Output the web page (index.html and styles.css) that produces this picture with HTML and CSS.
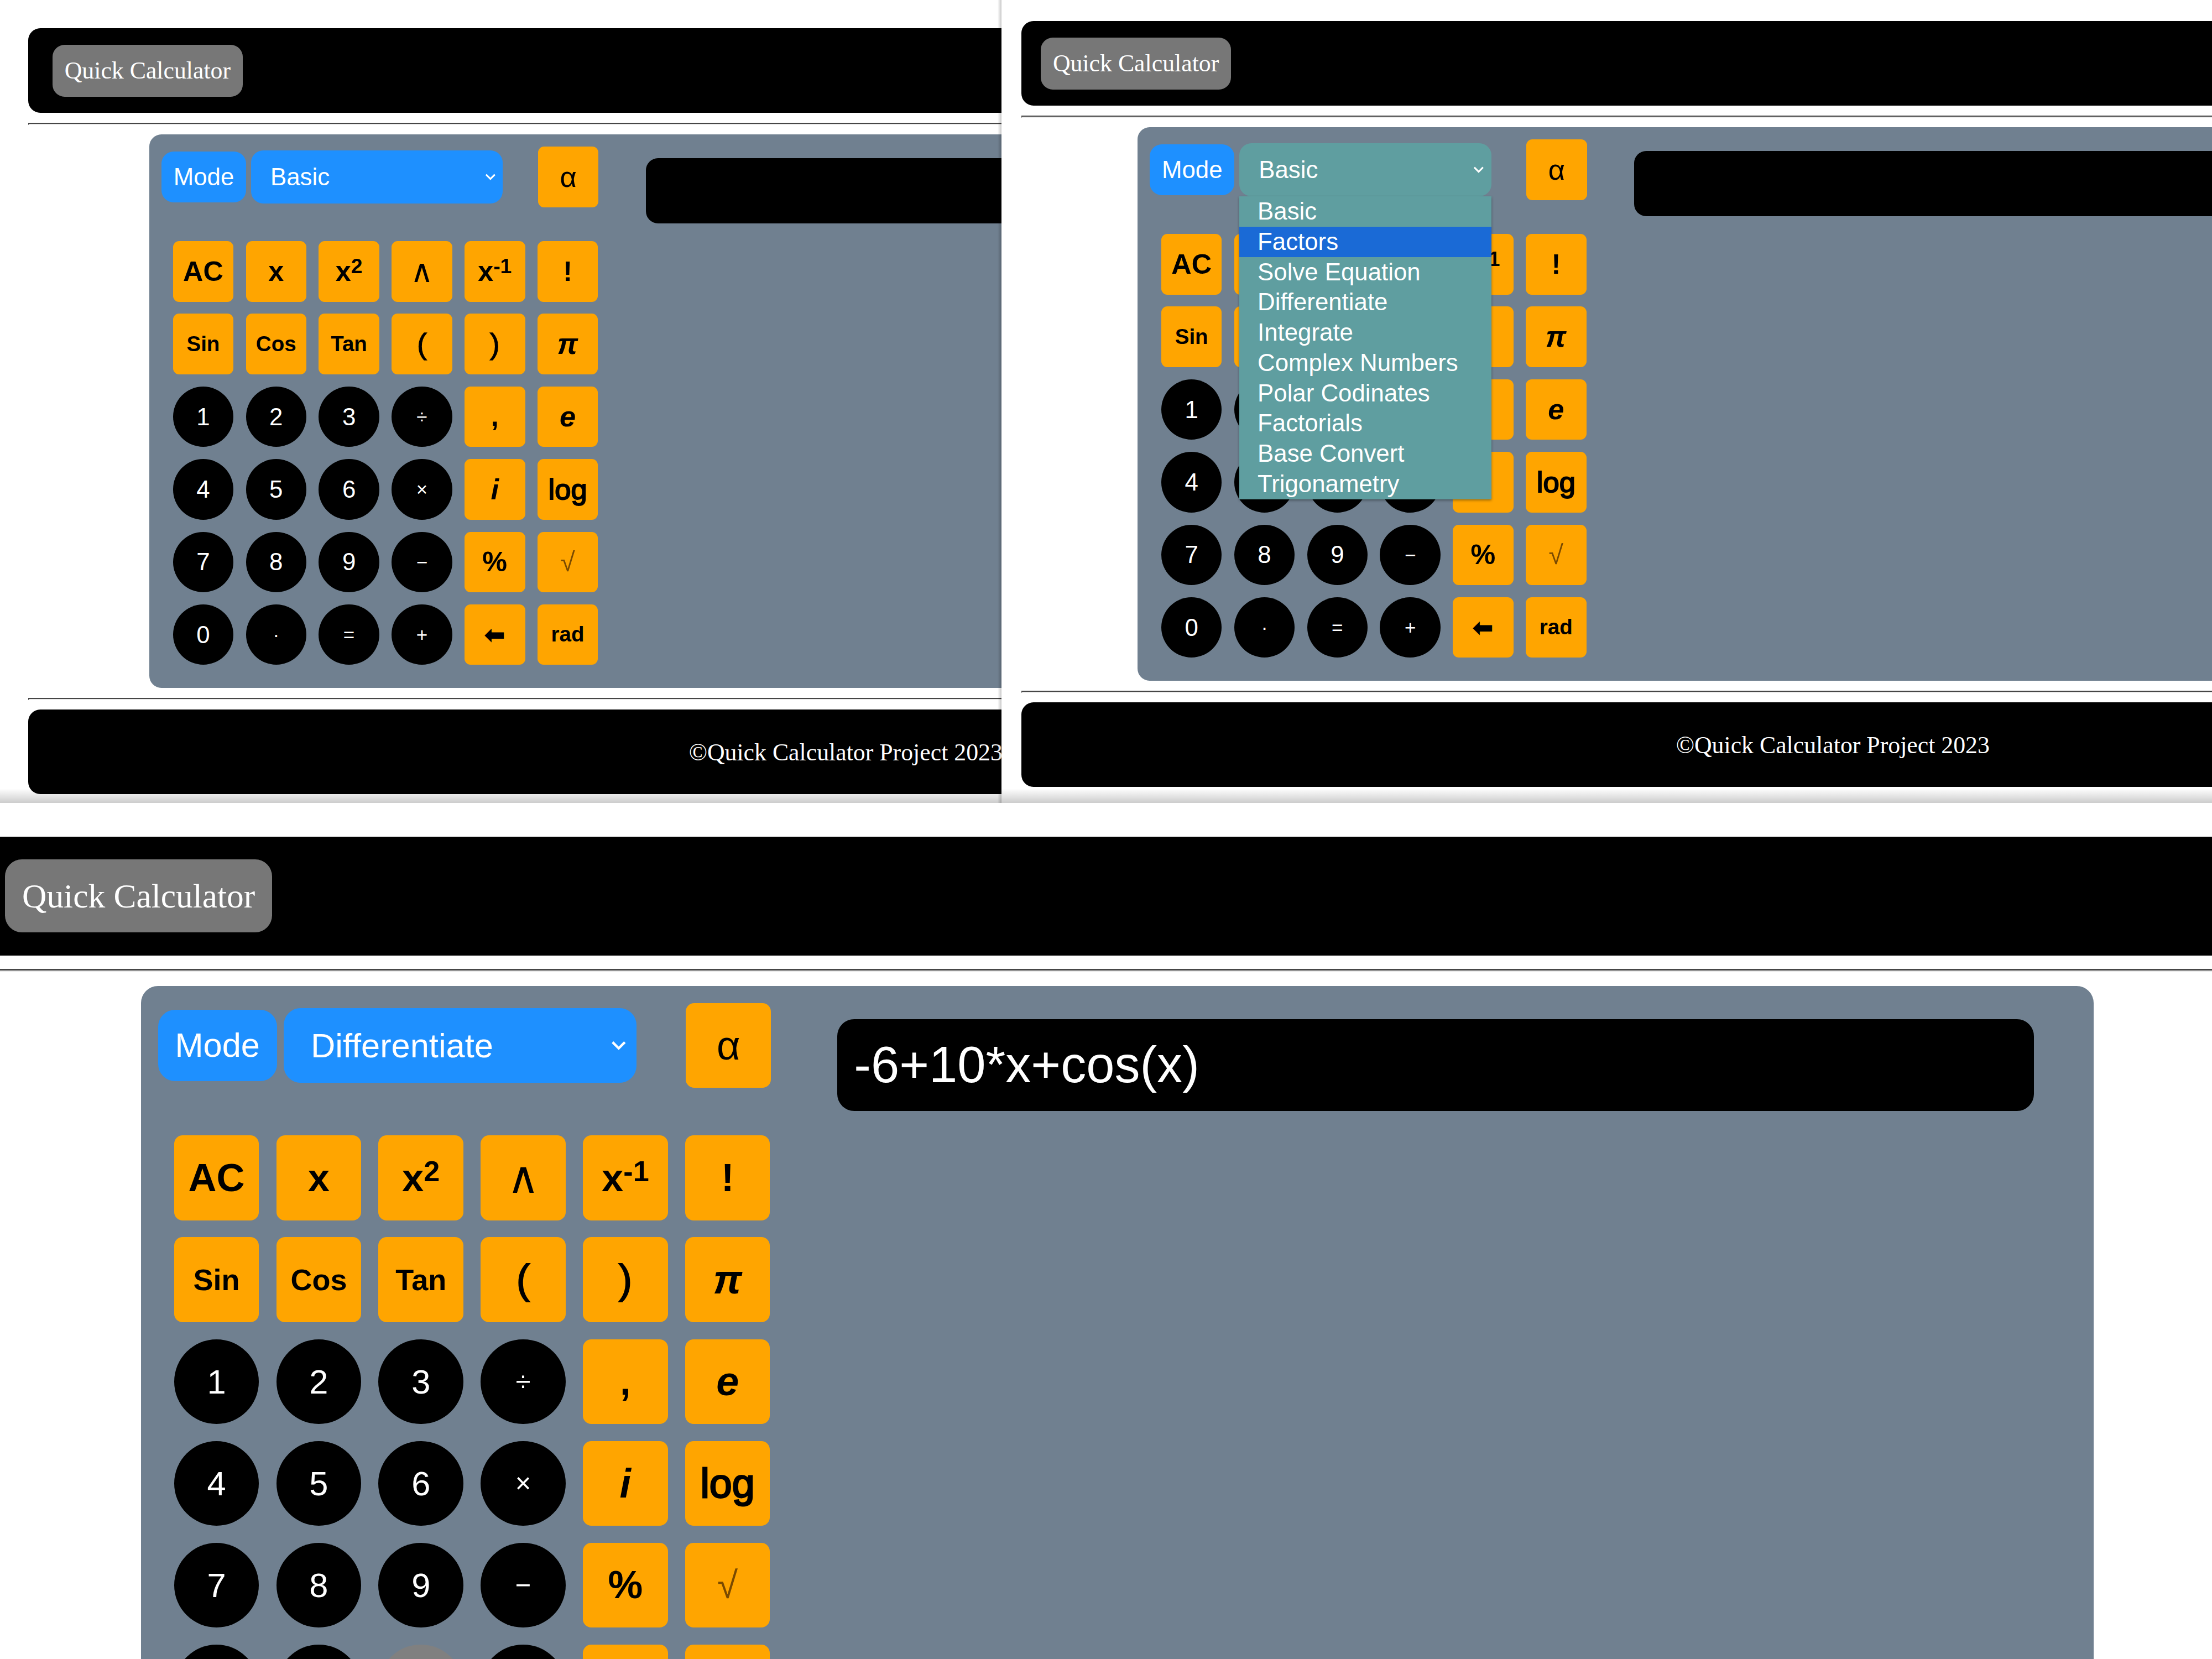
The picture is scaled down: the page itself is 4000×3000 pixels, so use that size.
FILE: index.html
```html
<!DOCTYPE html>
<html>
<head>
<meta charset="utf-8">
<link rel="stylesheet" href="styles.css">
</head>
<body>
<div class="top-row">
  <section class="shot shot-a">
    <div class="page zoom-a">
      <header class="bar head"><span class="brand">Quick Calculator</span></header>
      <hr>
      <div class="calc">
        <div class="pad">
          <div class="modes">
            <div class="mode">Mode</div>
            <div class="select">Basic<svg class="chev" viewBox="0 0 10 6"><path d="M1 1 L5 5 L9 1"/></svg></div>
            <div class="key alpha">α</div>
          </div>
          <div class="keys">
            <div class="key">AC</div><div class="key">x</div><div class="key">x<sup>2</sup></div><div class="key thin">∧</div><div class="key">x<sup>-1</sup></div><div class="key">!</div>
            <div class="key small">Sin</div><div class="key small">Cos</div><div class="key small">Tan</div><div class="key paren">(</div><div class="key paren">)</div><div class="key ital">π</div>
            <div class="key num">1</div><div class="key num">2</div><div class="key num">3</div><div class="key num op">÷</div><div class="key">,</div><div class="key ital">e</div>
            <div class="key num">4</div><div class="key num">5</div><div class="key num">6</div><div class="key num op">×</div><div class="key ital">i</div><div class="key log">log</div>
            <div class="key num">7</div><div class="key num">8</div><div class="key num">9</div><div class="key num op">−</div><div class="key">%</div><div class="key root">√</div>
            <div class="key num">0</div><div class="key num op">·</div><div class="key num op">=</div><div class="key num op">+</div><div class="key arrow">⬅</div><div class="key small">rad</div>
          </div>
        </div>
        <div class="display"></div>
      </div>
      <hr>
      <footer class="bar foot">©Quick Calculator Project 2023</footer>
    </div>
  </section>
  <section class="shot shot-b">
    <div class="page zoom-b shifted">
      <header class="bar head"><span class="brand">Quick Calculator</span></header>
      <hr>
      <div class="calc">
        <div class="pad">
          <div class="modes">
            <div class="mode">Mode</div>
            <div class="select open">Basic<svg class="chev" viewBox="0 0 10 6"><path d="M1 1 L5 5 L9 1"/></svg>
              <ul class="menu">
                <li>Basic</li><li class="hl">Factors</li><li>Solve Equation</li><li>Differentiate</li><li>Integrate</li><li>Complex Numbers</li><li>Polar Codinates</li><li>Factorials</li><li>Base Convert</li><li>Trigonametry</li>
              </ul>
            </div>
            <div class="key alpha">α</div>
          </div>
          <div class="keys">
            <div class="key">AC</div><div class="key">x</div><div class="key">x<sup>2</sup></div><div class="key thin">∧</div><div class="key">x<sup>-1</sup></div><div class="key">!</div>
            <div class="key small">Sin</div><div class="key small">Cos</div><div class="key small">Tan</div><div class="key paren">(</div><div class="key paren">)</div><div class="key ital">π</div>
            <div class="key num">1</div><div class="key num">2</div><div class="key num">3</div><div class="key num op">÷</div><div class="key">,</div><div class="key ital">e</div>
            <div class="key num">4</div><div class="key num">5</div><div class="key num">6</div><div class="key num op">×</div><div class="key ital">i</div><div class="key log">log</div>
            <div class="key num">7</div><div class="key num">8</div><div class="key num">9</div><div class="key num op">−</div><div class="key">%</div><div class="key root">√</div>
            <div class="key num">0</div><div class="key num op">·</div><div class="key num op">=</div><div class="key num op">+</div><div class="key arrow">⬅</div><div class="key small">rad</div>
          </div>
        </div>
        <div class="display"></div>
      </div>
      <hr>
      <footer class="bar foot">©Quick Calculator Project 2023</footer>
    </div>
  </section>
</div>
<section class="shot shot-c">
  <div class="shift">
    <div class="page zoom-c">
      <header class="bar head flat"><span class="brand">Quick Calculator</span></header>
      <hr>
      <div class="calc">
        <div class="pad">
          <div class="modes">
            <div class="mode">Mode</div>
            <div class="select">Differentiate<svg class="chev" viewBox="0 0 10 6"><path d="M1 1 L5 5 L9 1"/></svg></div>
            <div class="key alpha">α</div>
          </div>
          <div class="keys">
            <div class="key">AC</div><div class="key">x</div><div class="key">x<sup>2</sup></div><div class="key thin">∧</div><div class="key">x<sup>-1</sup></div><div class="key">!</div>
            <div class="key small">Sin</div><div class="key small">Cos</div><div class="key small">Tan</div><div class="key paren">(</div><div class="key paren">)</div><div class="key ital">π</div>
            <div class="key num">1</div><div class="key num">2</div><div class="key num">3</div><div class="key num op">÷</div><div class="key">,</div><div class="key ital">e</div>
            <div class="key num">4</div><div class="key num">5</div><div class="key num">6</div><div class="key num op">×</div><div class="key ital">i</div><div class="key log">log</div>
            <div class="key num">7</div><div class="key num">8</div><div class="key num">9</div><div class="key num op">−</div><div class="key">%</div><div class="key root">√</div>
            <div class="key num">0</div><div class="key num op">·</div><div class="key num op hover">=</div><div class="key num op">+</div><div class="key arrow">⬅</div><div class="key small">rad</div>
          </div>
        </div>
        <div class="display">-6+10*x+cos(x)</div>
      </div>
      <hr>
      <footer class="bar foot">©Quick Calculator Project 2023</footer>
    </div>
  </div>
</section>
</body>
</html>
```

FILE: styles.css
```css
html, body { margin: 0; padding: 0; }
body {
  width: 4000px;
  height: 3000px;
  background: #fff;
  overflow: hidden;
  font-family: "Liberation Sans", Arial, sans-serif;
}
.top-row { display: flex; height: 1452px; }
.shot { position: relative; overflow: hidden; box-sizing: border-box; }
.shot-a { width: 1811px; flex: none; padding: 51px 0 0 51px; z-index: 2; }
.shot-b { width: 2189px; flex: none; padding: 38px 0 0 36px; }
.shot-c { height: 1548px; padding-top: 61px; }
.shift { margin-left: -52px; }

.shot-a::after {
  content: ""; position: absolute; top: 0; right: 0; width: 7px; height: 100%;
  background: linear-gradient(to right, rgba(0,0,0,0), rgba(0,0,0,0.22));
}
.shot-a::before, .shot-b::before {
  content: ""; position: absolute; left: 0; bottom: 0; width: 100%; height: 26px;
  background: linear-gradient(to bottom, rgba(0,0,0,0), rgba(0,0,0,0.2));
  z-index: 3;
}

.zoom-a { zoom: 2.19; }
.zoom-b { zoom: 2.19; }
.zoom-c { zoom: 3.07; }

.page { width: 1350px; }

.bar {
  background: #000;
  height: 70px;
  border-radius: 10px;
  box-sizing: border-box;
}
.bar.flat { border-radius: 0; }
.head { display: flex; align-items: center; padding-left: 20px; }
.brand {
  background: #777;
  color: #fff;
  font-family: "Liberation Serif", "Times New Roman", serif;
  font-size: 20px;
  line-height: 23px;
  padding: 10px;
  border-radius: 10px;
}
.foot {
  display: flex; align-items: center; justify-content: center;
  color: #fff;
  font-family: "Liberation Serif", "Times New Roman", serif;
  font-size: 20px;
}
hr {
  margin: 8px 0;
  border: 1px inset #eee;
  border-top-color: #9a9a9a;
  border-left-color: #9a9a9a;
  height: 0;
}

/* the second capture sits ~4px further left inside its frame */
.shifted .head { padding-left: 16px; }
.shifted .calc { margin-left: 96px; }
.shifted .foot { padding-right: 10px; }

.calc {
  margin: 0 100px;
  height: 457px;
  box-sizing: border-box;
  background: #708090;
  border-radius: 10px;
  padding: 10px 35px 0 10px;
  display: flex;
}
.pad { width: 361px; flex: none; }
.modes { display: flex; align-items: center; height: 50px; }
.mode {
  background: #1e90ff; color: #fff;
  font-size: 20px; line-height: 23px;
  padding: 9.5px 10px;
  border-radius: 10px;
}
.select {
  position: relative;
  margin-left: 4px;
  width: 208px; height: 44px;
  box-sizing: border-box;
  background: #1e90ff; color: #fff;
  border-radius: 10px;
  font-size: 20px;
  display: flex; align-items: center;
  padding-left: 16px;
}
.select.open { background: #5f9ea0; }
.chev {
  position: absolute; right: 6px; top: 19px;
  width: 9px; height: 6px;
  fill: none; stroke: #fff; stroke-width: 1.6;
}
.menu {
  position: absolute; left: 0; top: 44px;
  width: 208px;
  margin: 0; padding: 0;
  list-style: none;
  background: #5f9ea0;
  box-shadow: 0 1px 2px rgba(0,0,0,0.35);
  z-index: 5;
}
.menu li {
  height: 25px; line-height: 25px;
  padding-left: 15px;
  font-size: 20px;
  color: #fff;
  white-space: nowrap;
}
.menu li.hl { background: #1a6ad6; }

.key {
  width: 50px; height: 50px;
  border-radius: 5px;
  background: #ffa500;
  color: #000;
  display: flex; align-items: center; justify-content: center;
  font-size: 23px; font-weight: bold;
  line-height: 1;
}
.alpha { margin-left: 29px; font-weight: normal; font-size: 24px; }
.keys {
  margin: 28px 0 0 9.5px;
  display: grid;
  grid-template-columns: repeat(6, 50px);
  grid-auto-rows: 50px;
  column-gap: 10.2px;
  row-gap: 10px;
}
.key sup { font-size: 17px; position: relative; top: -4px; line-height: 1; }
.key.thin { font-weight: normal; font-size: 26px; }
.key.small { font-size: 17.6px; }
.key.paren { font-size: 24px; font-weight: normal; -webkit-text-stroke: 0.6px #000; }
.key.ital { font-style: italic; font-size: 24px; }
.key.log { font-size: 24px; font-weight: normal; -webkit-text-stroke: 0.9px #000; }
.key.root { font-weight: normal; font-size: 22px; color: #7a4a00; }
.key.arrow { font-size: 20px; }
.key.num {
  border-radius: 50%;
  background: #000; color: #fff;
  font-size: 20px; font-weight: normal;
}
.key.num.op { font-size: 16px; }
.key.num.hover { background: #808080; }

.display {
  flex: 1;
  margin: 9.5px 0 0 39px;
  height: 54px;
  background: #000;
  border-radius: 10px;
  color: #fff;
  font-size: 30px;
  display: flex; align-items: center;
  padding-left: 10px;
  box-sizing: border-box;
}
```
